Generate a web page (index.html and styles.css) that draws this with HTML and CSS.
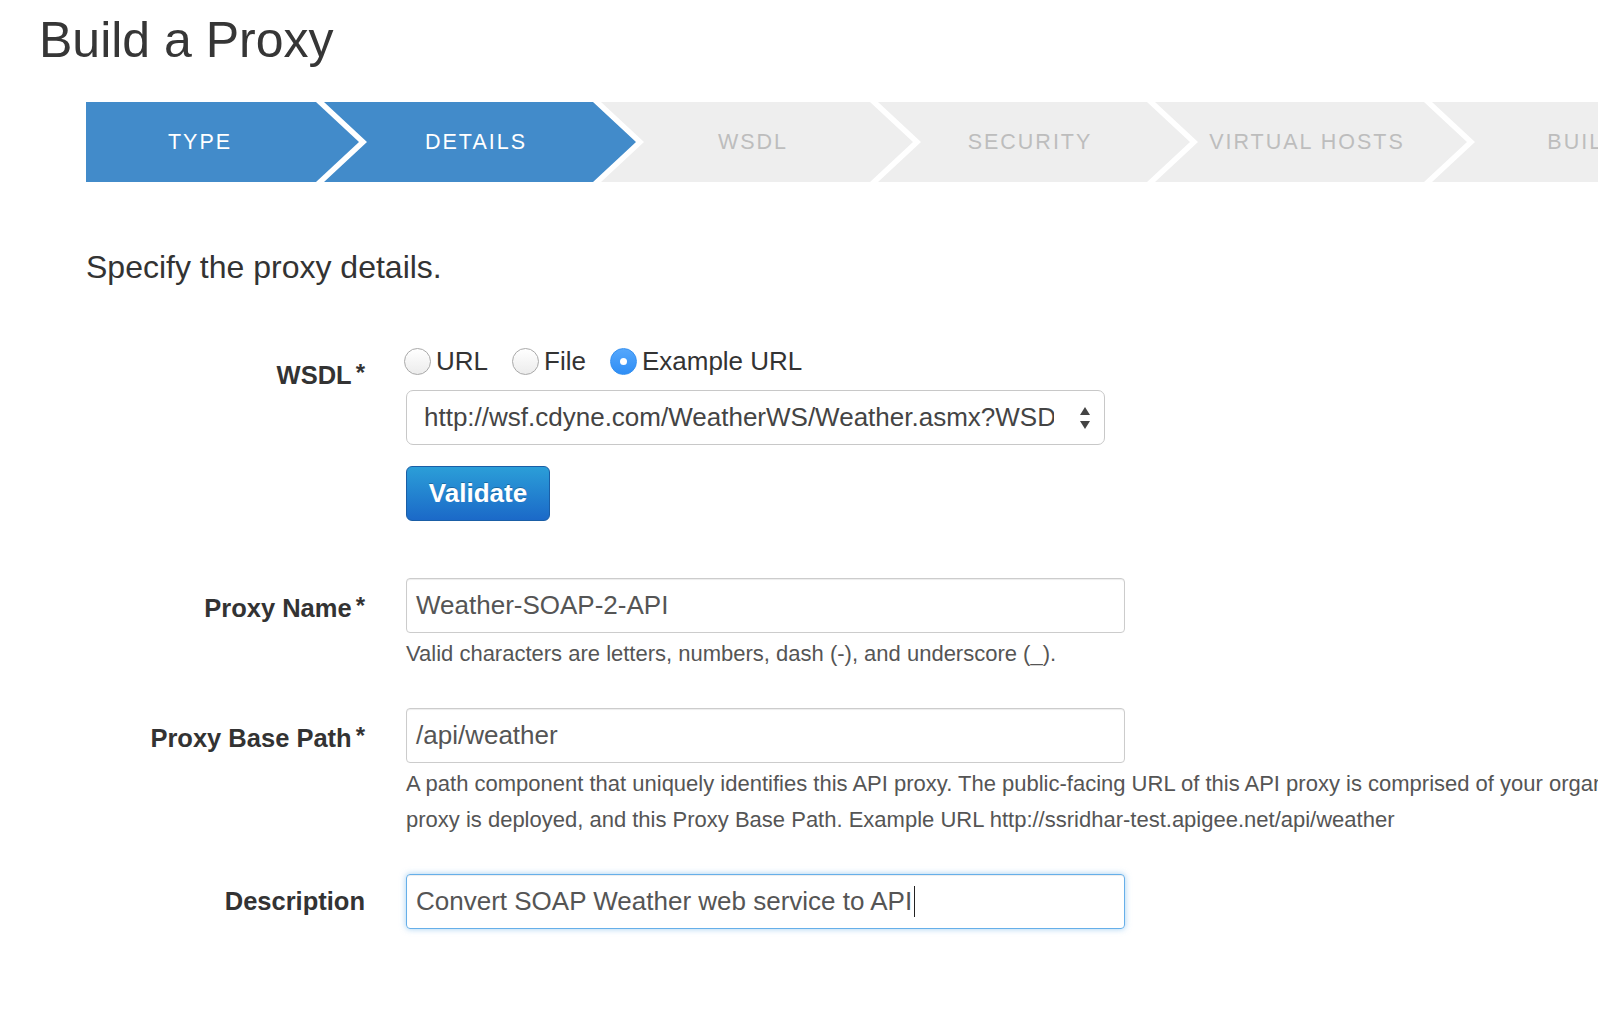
FILE: index.html
```html
<!DOCTYPE html>
<html lang="en">
<head>
<meta charset="utf-8">
<title>Build a Proxy</title>
<link rel="stylesheet" href="styles.css">
</head>
<body>
<h1 class="title">Build a Proxy</h1>

<div class="wizard">
  <div class="step step-first active">TYPE</div>
  <div class="step active">DETAILS</div>
  <div class="step">WSDL</div>
  <div class="step">SECURITY</div>
  <div class="step">VIRTUAL HOSTS</div>
  <div class="step">BUILD</div>
</div>

<p class="intro">Specify the proxy details.</p>

<div class="form">
  <div class="group group-wsdl">
    <div class="label">WSDL<span class="req">*</span></div>
    <div class="controls">
      <div class="radios">
        <div class="radio"><span class="dot"></span>URL</div>
        <div class="radio"><span class="dot"></span>File</div>
        <div class="radio"><span class="dot checked"></span>Example URL</div>
      </div>
      <div class="select">
        <span class="select-text">http://wsf.cdyne.com/WeatherWS/Weather.asmx?WSDL</span>
        <svg class="select-arrows" width="12" height="26" viewBox="0 0 12 26"><path d="M6 2 L11 10 L1 10 Z" fill="#444"/><path d="M6 24 L11 16 L1 16 Z" fill="#444"/></svg>
      </div>
      <div class="btn">Validate</div>
    </div>
  </div>

  <div class="group">
    <div class="label">Proxy Name<span class="req">*</span></div>
    <div class="controls">
      <div class="input">Weather-SOAP-2-API</div>
      <div class="help">Valid characters are letters, numbers, dash (-), and underscore (_).</div>
    </div>
  </div>

  <div class="group">
    <div class="label">Proxy Base Path<span class="req">*</span></div>
    <div class="controls">
      <div class="input">/api/weather</div>
      <div class="help">A path component that uniquely identifies this API proxy. The public-facing URL of this API proxy is comprised of your organization name, an environment where this API<br>proxy is deployed, and this Proxy Base Path. Example URL http://ssridhar-test.apigee.net/api/weather</div>
    </div>
  </div>

  <div class="group">
    <div class="label">Description</div>
    <div class="controls">
      <div class="input focused">Convert SOAP Weather web service to API<span class="caret"></span></div>
    </div>
  </div>
</div>
</body>
</html>
```

FILE: styles.css
```css
html, body {
  margin: 0;
  padding: 0;
  background: #ffffff;
  overflow: hidden;
}

body {
  font-family: "Liberation Sans", Arial, Helvetica, sans-serif;
  color: #333333;
  width: 1598px;
  height: 1012px;
}

.title {
  margin: 0;
  padding: 12px 0 0 39px;
  font-size: 50px;
  line-height: 56px;
  font-weight: normal;
  color: #363636;
  letter-spacing: 0;
}

/* Wizard */
.wizard {
  display: flex;
  margin-top: 34px;
  padding-left: 86px;
  height: 80px;
}

.step {
  flex: 0 0 auto;
  width: 312px;
  height: 80px;
  box-sizing: border-box;
  margin-left: -35px;
  padding: 0 45px 0 37px;
  display: flex;
  align-items: center;
  justify-content: center;
  background: #eeeeee;
  color: #bdbdbd;
  font-size: 21.5px;
  letter-spacing: 2px;
  white-space: nowrap;
  clip-path: polygon(0 0, 269px 0, 312px 50%, 269px 100%, 0 100%, 43px 50%);
}

.step-first {
  width: 273px;
  margin-left: 0;
  padding: 0 45px 0 0;
  clip-path: polygon(0 0, 230px 0, 273px 50%, 230px 100%, 0 100%);
}

.step.active {
  background: #428bca;
  color: #ffffff;
}

.intro {
  margin: 66px 0 0 86px;
  font-size: 32px;
  line-height: 38px;
  color: #333333;
}

/* Form */
.form {
  margin-top: 59px;
}

.group {
  display: grid;
  grid-template-columns: 279px 1fr;
  column-gap: 41px;
  padding-left: 86px;
  margin-bottom: 36px;
}

.group-wsdl {
  margin-bottom: 57px;
}

.label {
  text-align: right;
  font-size: 25.5px;
  font-weight: bold;
  line-height: 55px;
  padding-top: 0;
  color: #333333;
  white-space: nowrap;
}

.req {
  font-size: 24px;
  margin-left: 4px;
  vertical-align: 3px;
}

.controls {
  min-width: 0;
}

.radios {
  display: flex;
  align-items: center;
  height: 33px;
  font-size: 26px;
  color: #333333;
}

.radio {
  display: flex;
  align-items: center;
  gap: 5px;
  margin-right: 26px;
}

.dot {
  width: 27px;
  height: 27px;
  box-sizing: border-box;
  border-radius: 50%;
  border: 1px solid #a9a9a9;
  background: linear-gradient(#ffffff, #ececec);
  display: flex;
  align-items: center;
  justify-content: center;
  margin-left: -2px;
}

.dot.checked {
  border-color: #3590f0;
  background: linear-gradient(#55a7fc, #2f8ef5);
}

.dot.checked::after {
  content: "";
  width: 7px;
  height: 7px;
  border-radius: 50%;
  background: #ffffff;
}

.select {
  margin-top: 12px;
  width: 699px;
  height: 55px;
  box-sizing: border-box;
  border: 1px solid #c8c8c8;
  border-radius: 7px;
  display: flex;
  align-items: center;
  padding: 0 13px 0 17px;
  background: #ffffff;
}

.select-text {
  flex: 0 0 630px;
  overflow: hidden;
  white-space: nowrap;
  font-size: 26px;
  color: #444444;
}

.select-arrows {
  margin-left: auto;
}

.btn {
  margin-top: 21px;
  width: 144px;
  height: 55px;
  box-sizing: border-box;
  border: 1px solid #1a5ea6;
  border-radius: 6px;
  background: linear-gradient(#2b9ed8, #1b69c8);
  color: #ffffff;
  font-size: 26px;
  font-weight: bold;
  display: flex;
  align-items: center;
  justify-content: center;
  text-shadow: 0 -1px 0 rgba(0, 0, 0, 0.25);
}

.input {
  width: 719px;
  height: 55px;
  box-sizing: border-box;
  border: 1px solid #cccccc;
  border-radius: 4px;
  box-shadow: inset 0 1px 1px rgba(0, 0, 0, 0.075);
  display: flex;
  align-items: center;
  padding-left: 9px;
  font-size: 26px;
  color: #555555;
  white-space: nowrap;
}

.input.focused {
  border-color: #66afe9;
  box-shadow: inset 0 1px 1px rgba(0, 0, 0, 0.075), 0 0 6px rgba(102, 175, 233, 0.6);
}

.caret {
  display: inline-block;
  width: 1px;
  height: 31px;
  background: #222222;
  margin-left: 2px;
}

.help {
  margin-top: 3px;
  font-size: 22px;
  line-height: 36px;
  color: #555555;
  white-space: nowrap;
}
```
